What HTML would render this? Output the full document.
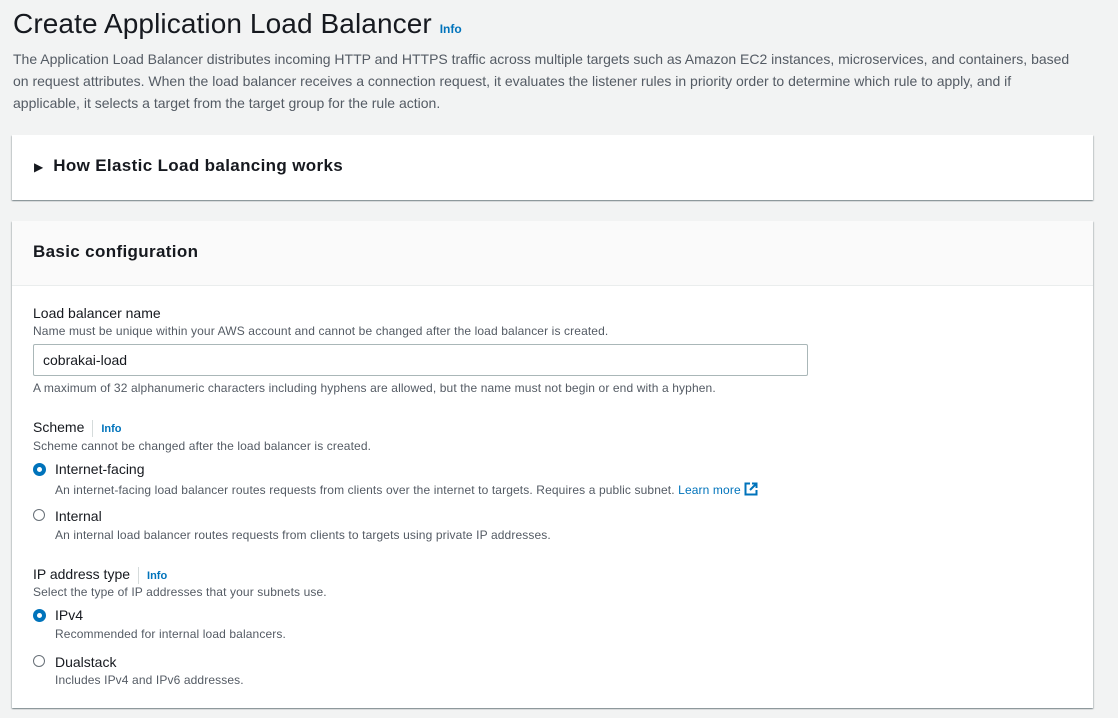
<!DOCTYPE html>
<html><head><meta charset="utf-8"><style>
body{margin:0;width:1118px;height:718px;background:#f2f3f3;font-family:"Liberation Sans",sans-serif;color:#16191f;position:relative;overflow:hidden}
.a{position:absolute;white-space:nowrap}
.card{position:absolute;left:12px;width:1081px;background:#fff;box-shadow:0 1px 1px 0 rgba(0,28,36,.3),1px 1px 1px 0 rgba(0,28,36,.15),-1px 1px 1px 0 rgba(0,28,36,.15)}
.info{color:#0073bb;font-weight:bold;font-size:11px}
.s{font-size:12px;color:#545b64;letter-spacing:0.12px}
.l{font-size:14px}
.radio{position:absolute;left:33px;width:10px;height:10px;border-radius:50%;border:1.5px solid #687078;background:#fff}
.radio.on{border:4px solid #0073bb;width:5px;height:5px}
.sep{display:inline-block;width:1px;height:17px;background:#d5dbdb;vertical-align:middle;margin:0 8px 0 8px}
h{font-size:17px;font-weight:bold;line-height:22px;letter-spacing:0.35px}
</style></head><body>
<div class="a" style="left:13px;top:6px;font-size:28px;line-height:36px;letter-spacing:0.1px">Create Application Load Balancer <span class="info" style="font-size:12px;letter-spacing:0">Info</span></div>
<div class="a" style="left:13px;top:48px;width:1065px;white-space:normal;font-size:14px;line-height:22px;color:#545b64">The Application Load Balancer distributes incoming HTTP and HTTPS traffic across multiple targets such as Amazon EC2 instances, microservices, and containers, based on request attributes. When the load balancer receives a connection request, it evaluates the listener rules in priority order to determine which rule to apply, and if applicable, it selects a target from the target group for the rule action.</div>
<div class="card" style="top:135px;height:65px">
<div class="a" style="left:22px;top:20px"><span style="font-size:12px;margin-right:10px">▶</span><h>How Elastic Load balancing works</h></div>
</div>
<div class="card" style="top:221px;height:487px">
<div style="height:64px;background:#fafafa;border-bottom:1px solid #eaeded"></div>
<div class="a" style="left:21px;top:20px"><h>Basic configuration</h></div>
</div>
<div class="a l" style="left:33px;top:305px">Load balancer name</div>
<div class="a s" style="left:33px;top:324px">Name must be unique within your AWS account and cannot be changed after the load balancer is created.</div>
<div class="a" style="left:33px;top:344px;width:773px;height:30px;border:1px solid #aab7b8;border-radius:2px;background:#fff"></div>
<div class="a l" style="left:43px;top:352px">cobrakai-load</div>
<div class="a s" style="left:33px;top:381px">A maximum of 32 alphanumeric characters including hyphens are allowed, but the name must not begin or end with a hyphen.</div>
<div class="a l" style="left:33px;top:419px">Scheme<span class="sep"></span><span class="info">Info</span></div>
<div class="a s" style="left:33px;top:439px">Scheme cannot be changed after the load balancer is created.</div>
<div class="radio on" style="top:463px"></div>
<div class="a l" style="left:55px;top:461px">Internet-facing</div>
<div class="a s" style="left:55px;top:482px">An internet-facing load balancer routes requests from clients over the internet to targets. Requires a public subnet. <span style="color:#0073bb">Learn more</span> <svg width="14" height="14" viewBox="0 0 14 14" style="vertical-align:-2px"><path d="M6 1.5H1.5v11h11V8M8 1.5h4.5V6M12.5 1.5L6 8" fill="none" stroke="#0073bb" stroke-width="2"/></svg></div>
<div class="radio" style="top:509px"></div>
<div class="a l" style="left:55px;top:508px">Internal</div>
<div class="a s" style="left:55px;top:528px">An internal load balancer routes requests from clients to targets using private IP addresses.</div>
<div class="a l" style="left:33px;top:566px">IP address type<span class="sep"></span><span class="info">Info</span></div>
<div class="a s" style="left:33px;top:585px">Select the type of IP addresses that your subnets use.</div>
<div class="radio on" style="top:609px"></div>
<div class="a l" style="left:55px;top:607px">IPv4</div>
<div class="a s" style="left:55px;top:627px">Recommended for internal load balancers.</div>
<div class="radio" style="top:655px"></div>
<div class="a l" style="left:55px;top:654px">Dualstack</div>
<div class="a s" style="left:55px;top:673px">Includes IPv4 and IPv6 addresses.</div>
</body></html>
